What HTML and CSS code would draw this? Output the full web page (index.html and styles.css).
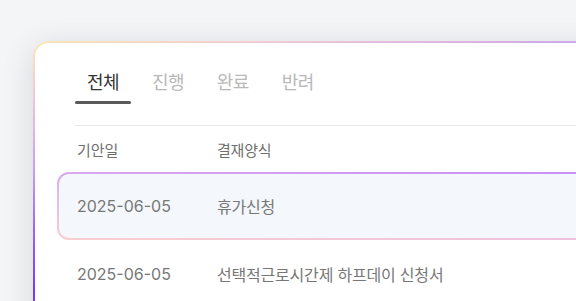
FILE: index.html
```html
<!DOCTYPE html>
<html lang="ko">
<head>
  <meta charset="UTF-8" />
  <meta name="viewport" content="width=device-width, initial-scale=1.0" />
  <title>결재 문서함</title>
  <link rel="stylesheet" href="styles.css">
</head>
<body>
  <div class="page">
    <section class="card">
      <div class="tabs-wrap">
        <nav class="tabs">
          <button class="tab active">전체</button>
          <button class="tab">진행</button>
          <button class="tab">완료</button>
          <button class="tab">반려</button>
        </nav>
      </div>

      <div class="table">
        <div class="thead">
          <span class="col-date">기안일</span>
          <span class="col-form">결재양식</span>
        </div>
        <div class="row selected">
          <span class="col-date">2025-06-05</span>
          <span class="col-form">휴가신청</span>
        </div>
        <div class="row">
          <span class="col-date">2025-06-05</span>
          <span class="col-form">선택적근로시간제 하프데이 신청서</span>
        </div>
      </div>
    </section>
  </div>
</body>
</html>
```

FILE: styles.css
```css
body {
  margin: 0;
  background: #f4f5f7;
  font-family: "Inter", "Noto Sans CJK KR", sans-serif;
  overflow: hidden;
}

.page {
  padding: 41px 0 0 33px;
}

.card {
  width: 640px;
  height: 330px;
  padding: 24px 0 0 22px;
  border: 2px solid transparent;
  border-radius: 16px;
  background:
    linear-gradient(#ffffff, #ffffff) padding-box,
    linear-gradient(168deg, #fde7b4 0%, #f0cbd6 10%, #c9a3ec 25%, #9a66ee 38%, #7c3aed 50%) border-box;
  box-shadow: 0 6px 32px rgba(20, 20, 40, 0.13);
}

.tabs-wrap {
  margin-left: 18px;
  padding-bottom: 21px;
  border-bottom: 1px solid #e9e9ec;
}

.tabs {
  display: flex;
  gap: 9px;
}

.tab {
  padding: 3px 12px 0;
  border: none;
  background: none;
  font-family: inherit;
  font-size: 18px;
  line-height: 26px;
  letter-spacing: -0.6px;
  color: #b8b8b8;
  cursor: pointer;
}

.tab::after {
  content: "";
  display: block;
  height: 3px;
  margin: 5px -12px 0;
  border-radius: 2px;
  background: transparent;
}

.tab.active {
  color: #333333;
}

.tab.active::after {
  background: #5a5a5a;
}

.thead {
  display: flex;
  align-items: center;
  height: 46px;
  padding-left: 20px;
  font-size: 15px;
  color: #6f6f6f;
}

.row {
  display: flex;
  align-items: center;
  box-sizing: border-box;
  height: 68px;
  padding: 0 18px;
  border: 2px solid transparent;
  border-radius: 12px;
  font-size: 16px;
  color: #777777;
}

.row.selected {
  background:
    linear-gradient(#f4f7fb, #f4f7fb) padding-box,
    linear-gradient(183deg, #c28af8 0%, #e3b6ec 50%, #fbcfcd 100%) border-box;
}

.col-date {
  width: 140px;
  flex-shrink: 0;
}

.col-form {
  letter-spacing: -0.2px;
}
```
